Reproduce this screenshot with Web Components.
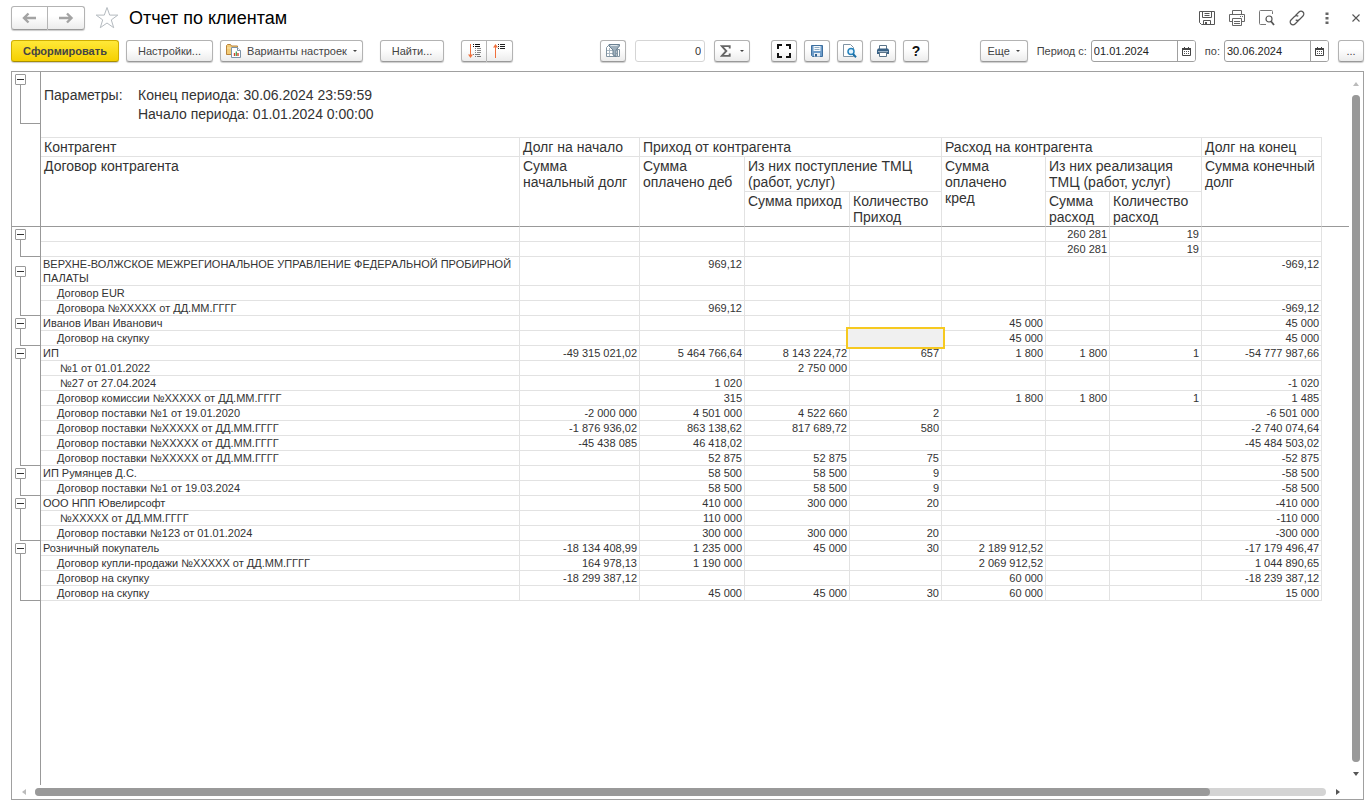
<!DOCTYPE html>
<html lang="ru">
<head>
<meta charset="utf-8">
<title>Отчет по клиентам</title>
<style>
  body { margin: 0; background: #fff; color: #333; font: 11px/14px "Liberation Sans", Arial, sans-serif; }
</style>
</head>
<body>
<report-page></report-page>
<script>
const icons = {
  back: '<svg width="16" height="12" viewBox="0 0 16 12"><path d="M2 6h12M6.500 1.500L2 6l4.500 4.500" fill="none" stroke="#a3a3a3" stroke-width="2.400"/></svg>',
  forward: '<svg width="16" height="12" viewBox="0 0 16 12"><path d="M1 6h12M9 1.500L13.500 6 9 10.500" fill="none" stroke="#a3a3a3" stroke-width="2.400"/></svg>',
  star: '<svg width="24" height="24" viewBox="0 0 24 24"><path d="M12 1.500l2.700 7.600h8.100l-6.500 4.800 2.400 7.800L12 17l-6.700 4.700 2.400-7.800L1.200 9.100h8.100z" fill="#fff" stroke="#b4babf" stroke-width="1"/></svg>',
  saveLine: '<svg width="16" height="16" viewBox="0 0 16 16"><path d="M.5 1.500h15v13h-13l-2-2z" fill="none" stroke="#555"/><path d="M3.500 1.500v6h9v-6M5.500 3.500h5M5.500 5.500h5M4.500 14.500v-4h7v4" fill="none" stroke="#555"/><path d="M6 12h2v2H6z" fill="#555"/></svg>',
  printLine: '<svg width="16" height="16" viewBox="0 0 16 16"><path d="M3.500 4.500v-4h9v4M3.500 11.500h-3v-7h15v7h-3M3.500 8.500h9v7h-9zM5 11.500h6M5 13.500h6M11 6.500h1M13 6.500h1" fill="none" stroke="#666"/></svg>',
  previewLine: '<svg width="16" height="16" viewBox="0 0 16 16"><path d="M13.500 4V1.500a1 1 0 0 0-1-1h-11a1 1 0 0 0-1 1v12a1 1 0 0 0 1 1H7" fill="none" stroke="#777"/><circle cx="10" cy="9" r="3" fill="none" stroke="#555" stroke-width="1.200"/><path d="M12 11.300l3 3.700" stroke="#555" stroke-width="1.800"/></svg>',
  link: '<svg width="16" height="16" viewBox="0 0 16 16"><path d="M6.500 5.500l3.500-3.500a2.800 2.800 0 0 1 4 4l-3.500 3.500a2.800 2.800 0 0 1-3.800.2M9.500 10.500L6 14a2.800 2.800 0 0 1-4-4l3.500-3.500a2.800 2.800 0 0 1 3.800-.2" fill="none" stroke="#555" stroke-width="1.200"/></svg>',
  dots: '<svg width="4" height="14" viewBox="0 0 4 14"><path d="M.5 1.500h3v2.500h-3zM.5 6h3v2.500h-3zM.5 10.500h3V13h-3z" fill="#666"/></svg>',
  close: '<svg width="8" height="8" viewBox="0 0 8 8"><path d="M.5.5l7 7m0-7l-7 7" stroke="#555" stroke-width="1.100"/></svg>',
  variants: '<svg width="15" height="14" viewBox="0 0 15 14"><path d="M.5 10.500V1.500l1-1h3l1 1.500h6v8.500z" fill="#f3cb76" stroke="#b9833b"/><path d="M1 4h10" stroke="#fbe5b0"/><path d="M5.500 3.500h6l3 3v7h-9z" fill="#fff" stroke="#7d93a8"/><path d="M11.500 3.500v3h3" fill="#fff" stroke="#7d93a8"/><path d="M8.500 12V9" stroke="#d5422f" stroke-width="1.400"/><path d="M10.300 12V7.500" stroke="#3aa04a" stroke-width="1.200"/><path d="M12 12V9" stroke="#d5422f" stroke-width="1.400"/></svg>',
  expand: '<svg width="13" height="14" viewBox="0 0 13 14"><path d="M2.500 0v12" stroke="#f0703c"/><path d="M0 10.500h5L2.500 14z" fill="#f0703c"/><path d="M5 .5h1M7 .5h5M5 2.500h1M7 2.500h5" stroke="#111"/><path d="M7 4.500h1M9 4.500h4M7 6.500h1M9 6.500h4M7 8.500h1M9 8.500h4" stroke="#888"/><path d="M5 10.500h1M7 10.500h5M7 12.500h1M9 12.500h4" stroke="#777"/></svg>',
  collapse: '<svg width="13" height="14" viewBox="0 0 13 14"><path d="M2.500 2v12" stroke="#f0703c"/><path d="M0 3.500h5L2.500 0z" fill="#f0703c"/><path d="M5 .5h1M7 .5h5M5 2.500h1M7 2.500h5M5 4.500h1M7 4.500h5" stroke="#222"/></svg>',
  filter: '<svg width="14" height="14" viewBox="0 0 14 14"><path d="M.5 3.500l2-2h9v11H.5z" fill="#fff" stroke="#8093a1"/><path d="M3.500 4v8M1 6.500h10M1 9.500h10" stroke="#a9b7c2"/><path d="M11.500 5.500h2v7h-2z" fill="#fff" stroke="#8093a1"/><path d="M3 .5h10.500v1.500L10 6v6.500l-3-1.500V6L3 2z" fill="#9fb0bd" stroke="#6b8192"/><path d="M4.500 1.500h7" stroke="#dfe7ec"/></svg>',
  sigma: '<svg width="11" height="12" viewBox="0 0 11 12"><path d="M9.700 3.500V1.100H1.800L6.300 6l-4.500 4.900h7.900V8.500" fill="none" stroke="#666" stroke-width="1.900"/></svg>',
  full: '<svg width="14" height="14" viewBox="0 0 14 14"><path d="M1 5V1h4M9 1h4v4M13 9v4H9M5 13H1V9" fill="none" stroke="#111" stroke-width="2"/></svg>',
  save: '<svg width="12" height="12" viewBox="0 0 12 12"><path d="M.5.500h11v11h-10l-1-1z" fill="#6d9cc9" stroke="#3d6f9f"/><path d="M2.500 1h7v5h-7z" fill="#f5f9fc"/><path d="M3.500 2.500h5M3.500 4.500h5" stroke="#8eabc3"/><path d="M3 8h6v3.500H3z" fill="#e6edf3"/><path d="M4 9h2v2.500H4z" fill="#2f5f8e"/></svg>',
  preview: '<svg width="14" height="14" viewBox="0 0 14 14"><path d="M.5 12.500V.5h7l3 3v9z" fill="#fff" stroke="#7f93a3"/><circle cx="8" cy="7.500" r="3" fill="#e3f2fc" stroke="#2382bd" stroke-width="1.500"/><path d="M10 10l3 3.200" stroke="#1c6ea5" stroke-width="2"/></svg>',
  print: '<svg width="12" height="12" viewBox="0 0 12 12"><path d="M2.500 4V.5h7V4" fill="#fff" stroke="#5b7489"/><path d="M0 5l1-1.500h10L12 5v4H0z" fill="#3a6286"/><path d="M1 6.500h10" stroke="#9ab3c8"/><path d="M2.500 7.500h7v4h-7z" fill="#fff" stroke="#5b7489"/></svg>',
  calendar: '<svg width="9" height="9" viewBox="0 0 9 9"><path d="M.5 1.500h8v7h-8z" fill="#fff" stroke="#444"/><path d="M0 1h9v2H0zM2 0h1v1H2zM6 0h1v1H6z" fill="#444"/><path d="M2 4h1v1H2zM4 4h1v1H4zM6 4h1v1H6zM2 6h1v1H2zM4 6h1v1H4zM6 6h1v1H6z" fill="#555"/></svg>',
  caret: '<svg width="4" height="2" viewBox="0 0 4 2"><path d="M0 0h4L2 2z" fill="#444"/></svg>',
  up: '<svg width="6" height="4" viewBox="0 0 6 4"><path d="M0 4h6L3 0z" fill="#bbb"/></svg>',
  down: '<svg width="6" height="4" viewBox="0 0 6 4"><path d="M0 0h6L3 4z" fill="#555"/></svg>',
  left: '<svg width="4" height="6" viewBox="0 0 4 6"><path d="M4 0v6L0 3z" fill="#bbb"/></svg>',
  right: '<svg width="4" height="6" viewBox="0 0 4 6"><path d="M0 0v6l4-3z" fill="#555"/></svg>'
};

function define(name, render) {
  customElements.define(name, class extends HTMLElement {
    connectedCallback() {
      if (!this.shadowRoot) this.attachShadow({ mode: 'open' }).innerHTML = render(this);
    }
  });
}

define('ui-icon', el => `<style>:host{display:inline-flex;flex:none}svg{display:block}</style>${icons[el.getAttribute('name')]}`);

define('tool-button', el => `
<style>
  :host { display: inline-flex; flex: none; min-width: 26px; }
  button { flex: 1; display: flex; align-items: center; justify-content: center; gap: var(--gap, 6px); box-sizing: border-box; height: 22px;
    margin: 0; padding: 0; border: 1px solid #b3b3b3; border-bottom-color: #999; border-radius: 3px;
    background: linear-gradient(#fff 40%, #ececec); box-shadow: 0 1px 1px #ccc; color: #444; font: inherit; white-space: nowrap; }
  :host([kind=primary]) button { background: linear-gradient(#ffe838, #f5d000); border-color: #cfae00; border-bottom-color: #a88e00; font-weight: bold; }
  :host([kind=help]) button { color: #111; font-weight: bold; font-size: 14px; }
  :host([join=start]) button { border-radius: 3px 0 0 3px; }
  :host([join=end]) button { border-radius: 0 3px 3px 0; border-left: 0; }
  :host([tall]) button { height: 24px; }
</style>
<button type="button" aria-label="${el.getAttribute('label') || el.textContent.trim()}"><slot></slot></button>`);

define('date-field', el => `
<style>
  :host { display: inline-flex; align-items: center; gap: 4px; flex: none; }
  label { color: #444; }
  .box { display: flex; box-sizing: border-box; width: 105px; height: 22px; border: 1px solid #a0a0a0; border-radius: 3px; overflow: hidden; }
  input { flex: 1; min-width: 0; border: 0; padding: 0 2px; background: none; color: #222; font: inherit; outline: 0; }
  button { width: 18px; padding: 0; border: 0; border-left: 1px solid #a0a0a0; background: #fff; display: flex; align-items: center; justify-content: center; }
</style>
<label for="d">${el.getAttribute('label')}</label>
<div class="box"><input id="d" type="text" value="${el.getAttribute('value')}"><button type="button" aria-label="Выбрать дату"><ui-icon name="calendar"></ui-icon></button></div>`);

define('title-bar', () => `
<style>
  :host { display: flex; align-items: center; height: 24px; }
  tool-button { width: 37px; }
  .star { margin: 0 10px; }
  h1 { margin: 0; flex: 1; font-size: 18px; line-height: 24px; font-weight: normal; color: #000; }
  button { border: 0; padding: 0; background: none; display: flex; }
  nav { display: flex; align-items: center; gap: 14px; padding-right: 4px; }
  .more { margin-left: 6px; }
  .close { margin-left: 9px; }
</style>
<tool-button tall join="start" label="Назад"><ui-icon name="back"></ui-icon></tool-button>
<tool-button tall join="end" label="Вперед"><ui-icon name="forward"></ui-icon></tool-button>
<button class="star" type="button" aria-label="Избранное"><ui-icon name="star"></ui-icon></button>
<h1>Отчет по клиентам</h1>
<nav>
  <button type="button" aria-label="Сохранить"><ui-icon name="saveLine"></ui-icon></button>
  <button type="button" aria-label="Печать"><ui-icon name="printLine"></ui-icon></button>
  <button type="button" aria-label="Просмотр"><ui-icon name="previewLine"></ui-icon></button>
  <button type="button" aria-label="Ссылка"><ui-icon name="link"></ui-icon></button>
  <button class="more" type="button" aria-label="Меню"><ui-icon name="dots"></ui-icon></button>
  <button class="close" type="button" aria-label="Закрыть"><ui-icon name="close"></ui-icon></button>
</nav>`);

define('tool-bar', () => `
<style>
  :host { display: flex; align-items: center; height: 22px; }
  .group { display: flex; align-items: center; gap: 7px; }
  .pair { display: flex; margin-left: 10px; }
  .middle { margin-left: 87px; }
  .period { margin-left: auto; gap: 9px; }
  .main { width: 108px; } .settings { width: 87px; } .variants { width: 143px; } .find { width: 64px; margin-left: 10px; }
  .sum { width: 36px; margin: 0 14px 0 2px; --gap: 9px; } .more { width: 48px; }
  input { box-sizing: border-box; width: 70px; height: 22px; margin-left: 2px; padding: 0 3px; border: 1px solid #d5d5d5; border-radius: 3px; text-align: right; font: inherit; color: #333; }
</style>
<div class="group">
  <tool-button class="main" kind="primary">Сформировать</tool-button>
  <tool-button class="settings">Настройки...</tool-button>
  <tool-button class="variants" label="Варианты настроек"><ui-icon name="variants"></ui-icon>Варианты настроек <ui-icon name="caret"></ui-icon></tool-button>
  <tool-button class="find">Найти...</tool-button>
  <div class="pair">
    <tool-button join="start" label="Развернуть группы"><ui-icon name="expand"></ui-icon></tool-button>
    <tool-button join="end" label="Свернуть группы"><ui-icon name="collapse"></ui-icon></tool-button>
  </div>
</div>
<div class="group middle">
  <tool-button label="Отбор"><ui-icon name="filter"></ui-icon></tool-button>
  <input type="text" value="0" aria-label="Сумма выделенных ячеек">
  <tool-button class="sum" label="Сумма"><ui-icon name="sigma"></ui-icon><ui-icon name="caret"></ui-icon></tool-button>
  <tool-button label="Во весь экран"><ui-icon name="full"></ui-icon></tool-button>
  <tool-button label="Сохранить"><ui-icon name="save"></ui-icon></tool-button>
  <tool-button label="Просмотр"><ui-icon name="preview"></ui-icon></tool-button>
  <tool-button label="Печать"><ui-icon name="print"></ui-icon></tool-button>
  <tool-button kind="help" label="Справка">?</tool-button>
</div>
<div class="group period">
  <tool-button class="more" label="Еще">Еще <ui-icon name="caret"></ui-icon></tool-button>
  <date-field label="Период с:" value="01.01.2024"></date-field>
  <date-field label="по:" value="30.06.2024"></date-field>
  <tool-button label="Выбрать период">...</tool-button>
</div>`);

define('tree-toggle', () => `
<style>
  :host { display: block; }
  button { display: flex; align-items: center; justify-content: center; box-sizing: border-box; width: 11px; height: 11px; padding: 0; border: 1px solid #999; border-radius: 1px; background: #fff; }
  button::before { content: ""; width: 7px; height: 1px; background: #333; }
</style>
<button type="button" aria-label="Свернуть группу" aria-expanded="true"></button>`);

/* Each group: list of rows [name, eight values]; the first row is the group total. */
const groups = [
  [['', , , , , , '260 281', '19'], ['', , , , , , '260 281', '19']],
  [['ВЕРХНЕ-ВОЛЖСКОЕ МЕЖРЕГИОНАЛЬНОЕ УПРАВЛЕНИЕ ФЕДЕРАЛЬНОЙ ПРОБИРНОЙ<br>ПАЛАТЫ', , '969,12', , , , , , '-969,12'],
   ['Договор EUR'], ['Договора №XXXXX от ДД.ММ.ГГГГ', , '969,12', , , , , , '-969,12']],
  [['Иванов Иван Иванович', , , , , '45 000', , , '45 000'], ['Договор на скупку', , , , '*', '45 000', , , '45 000']],
  [['ИП', '-49 315 021,02', '5 464 766,64', '8 143 224,72', '657', '1 800', '1 800', '1', '-54 777 987,66'],
   ['&nbsp;№1 от 01.01.2022', , , '2 750 000'],
   ['&nbsp;№27 от 27.04.2024', , '1 020', , , , , , '-1 020'],
   ['Договор комиссии №XXXXX от ДД.ММ.ГГГГ', , '315', , , '1 800', '1 800', '1', '1 485'],
   ['Договор поставки №1 от 19.01.2020', '-2 000 000', '4 501 000', '4 522 660', '2', , , , '-6 501 000'],
   ['Договор поставки №XXXXX от ДД.ММ.ГГГГ', '-1 876 936,02', '863 138,62', '817 689,72', '580', , , , '-2 740 074,64'],
   ['Договор поставки №XXXXX от ДД.ММ.ГГГГ', '-45 438 085', '46 418,02', , , , , , '-45 484 503,02'],
   ['Договор поставки №XXXXX от ДД.ММ.ГГГГ', , '52 875', '52 875', '75', , , , '-52 875']],
  [['ИП Румянцев Д.С.', , '58 500', '58 500', '9', , , , '-58 500'],
   ['Договор поставки №1 от 19.03.2024', , '58 500', '58 500', '9', , , , '-58 500']],
  [['ООО НПП Ювелирсофт', , '410 000', '300 000', '20', , , , '-410 000'],
   ['&nbsp;№XXXXX от ДД.ММ.ГГГГ', , '110 000', , , , , , '-110 000'],
   ['Договор поставки №123 от 01.01.2024', , '300 000', '300 000', '20', , , , '-300 000']],
  [['Розничный покупатель', '-18 134 408,99', '1 235 000', '45 000', '30', '2 189 912,52', , , '-17 179 496,47'],
   ['Договор купли-продажи №XXXXX от ДД.ММ.ГГГГ', '164 978,13', '1 190 000', , , '2 069 912,52', , , '1 044 890,65'],
   ['Договор на скупку', '-18 299 387,12', , , , '60 000', , , '-18 239 387,12'],
   ['Договор на скупку', , '45 000', '45 000', '30', '60 000', , , '15 000']]
];

function bodyRow(row, i, size) {
  let cells = '';
  for (let c = 1; c <= 8; c++) {
    const v = row[c] || '';
    cells += v === '*' ? '<td class="selected"></td>' : `<td>${v}</td>`;
  }
  const tall = row[0].includes('<br>');
  const gutter = i ? '' : `<td class="gutter bracket${tall ? ' tall' : ''}" rowspan="${size}"><tree-toggle></tree-toggle></td>`;
  return `<tr>${gutter}<td class="name${i ? ' child' : ''}">${row[0]}</td>${cells}<td class="rest"></td></tr>`;
}

define('report-table', () => `
<style>
  :host { display: flex; flex-direction: column; }
  table { width: 100%; table-layout: fixed; border-collapse: separate; border-spacing: 0; }
  th, td { padding: 0 2px; border: 0 solid #e2e2e2; border-width: 0 1px 1px 0; vertical-align: top; white-space: nowrap; }
  td { height: 14px; text-align: right; }
  th { padding: 1px 3px; font-size: 14px; line-height: 16px; font-weight: normal; text-align: left; }
  .name { text-align: left; }
  .child { padding-left: 16px; }
  .gutter { padding: 0; border-width: 0 1px 0 0; border-color: #999; text-align: left; }
  .rest { border: 0; padding: 0; }
  .bracket { background: linear-gradient(#999, #999) 8px 100% / 21px 1px no-repeat, linear-gradient(#999, #999) 8px 7px / 1px 100% no-repeat; }
  .bracket tree-toggle { padding: 2px 0 0 3px; }
  .bracket.tall { background-position: 8px 100%, 8px 14px; }
  .tall tree-toggle { padding-top: 9px; }
  div.bracket { height: 52px; }
  .one th { height: 16px; } .two th { height: 32px; } .three th { height: 32px; }
  .edge, .three th { border-bottom: 1px solid #999; }
  .params { height: 65px; text-align: left; border-right: 0; }
  dl { display: grid; grid-template-columns: 94px auto; justify-content: start; margin: 14px 0 0; padding-left: 1px; font-size: 14px; line-height: 19px; }
  dt { grid-row: span 2; } dd { margin: 0; }
  .selected { position: relative; }
  .selected::after { content: ""; position: absolute; inset: -4px; border: 2px solid #f6c920; background: #f0f0f0; }
  .tail { flex: 1; width: 28px; border-right: 1px solid #999; }
</style>
<table>
  <colgroup><col style="width:29px"><col style="width:479px"><col style="width:120px"><col style="width:105px"><col style="width:105px"><col style="width:92px"><col style="width:104px"><col style="width:64px"><col style="width:92px"><col style="width:120px"><col></colgroup>
  <thead>
    <tr><td class="gutter"><div class="bracket"><tree-toggle></tree-toggle></div></td>
      <td class="params" colspan="9"><dl><dt>Параметры:</dt><dd>Конец периода: 30.06.2024 23:59:59</dd><dd>Начало периода: 01.01.2024 0:00:00</dd></dl></td><td class="rest"></td></tr>
    <tr class="one"><td class="gutter edge" rowspan="3"></td><th>Контрагент</th><th>Долг на начало</th><th colspan="3">Приход от контрагента</th><th colspan="3">Расход на контрагента</th><th>Долг на конец</th><td class="rest edge" rowspan="3"></td></tr>
    <tr class="two"><th class="edge" rowspan="2">Договор контрагента</th><th class="edge" rowspan="2">Сумма<br>начальный долг</th><th class="edge" rowspan="2">Сумма<br>оплачено деб</th><th colspan="2">Из них поступление ТМЦ<br>(работ, услуг)</th><th class="edge" rowspan="2">Сумма<br>оплачено<br>кред</th><th colspan="2">Из них реализация<br>ТМЦ (работ, услуг)</th><th class="edge" rowspan="2">Сумма конечный<br>долг</th></tr>
    <tr class="three"><th>Сумма приход</th><th>Количество<br>Приход</th><th>Сумма<br>расход</th><th>Количество<br>расход</th></tr>
  </thead>
  ${groups.map(g => `<tbody>${g.map((r, i) => bodyRow(r, i, g.length)).join('')}</tbody>`).join('')}
</table>
<div class="tail"></div>`);

define('scroll-bar', el => {
  const v = el.hasAttribute('vertical');
  return `
<style>
  :host { display: flex; flex-direction: ${v ? 'column' : 'row'}; }
  .arrow { flex: 0 0 23px; display: flex; align-items: center; justify-content: center; }
  .track { flex: 1; margin: ${v ? '0 3px' : '3px 0'}; display: flex; border-radius: 4px; background: #d4d4d4; }
  .thumb { ${v ? 'width: 100%' : 'width: 91%'}; border-radius: 4px; background: #999; }
</style>
<span class="arrow"><ui-icon name="${v ? 'up' : 'left'}"></ui-icon></span>
<div class="track"><div class="thumb"></div></div>
<span class="arrow"><ui-icon name="${v ? 'down' : 'right'}"></ui-icon></span>`;
});

define('report-page', () => `
<style>
  :host { display: flex; flex-direction: column; box-sizing: border-box; min-height: 100vh; padding: 6px 4px 4px 11px; }
  tool-bar { margin: 10px 0 9px; }
  main { flex: 1; display: grid; grid-template: 1fr 14px / minmax(0, 1fr) 14px; border: 1px solid #a0a0a0; }
</style>
<title-bar></title-bar>
<tool-bar></tool-bar>
<main>
  <report-table></report-table>
  <scroll-bar vertical></scroll-bar>
  <scroll-bar></scroll-bar>
</main>`);
</script>
</body>
</html>
